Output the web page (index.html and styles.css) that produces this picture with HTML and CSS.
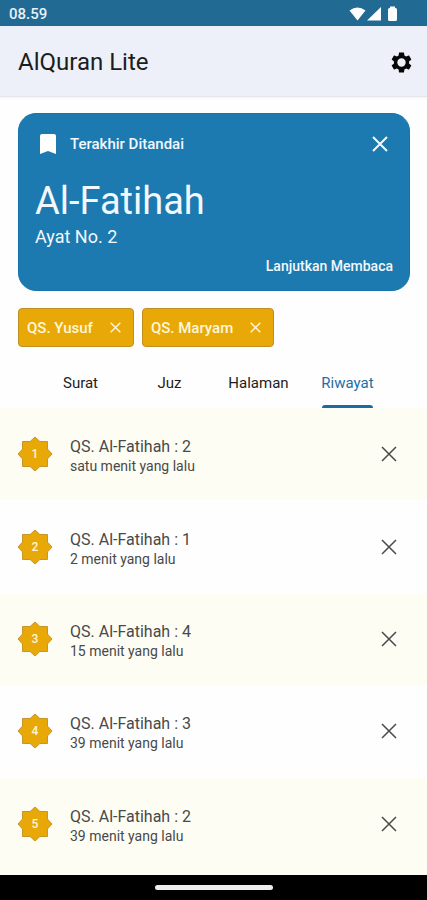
FILE: index.html
```html
<!DOCTYPE html>
<html lang="id">
<head>
<meta charset="utf-8">
<meta name="viewport" content="width=device-width, initial-scale=1">
<title>AlQuran Lite</title>
<link rel="stylesheet" href="styles.css">
</head>
<body>
<svg class="defs" aria-hidden="true">
  <symbol id="close" viewBox="0 0 16 16"><path d="M1 1 15 15M15 1 1 15" fill="none" stroke="currentColor"/></symbol>
  <symbol id="star" viewBox="0 0 36 36"><path d="M18 1 22.9 5.5H30.5V13.1L35 18 30.5 22.9V30.5H22.9L18 35 13.1 30.5H5.500V22.9L1 18 5.500 13.100V5.500H13.100Z" fill="#e8a908" stroke="#c8942c" stroke-width="1"/></symbol>
</svg>
<div class="statusbar">
  <span>08.59</span>
  <svg class="status-icons" viewBox="0 0 50 16" aria-hidden="true">
    <path d="M0.500 4.500Q8.500-1.500 16.500 4.500L8.500 14.500ZM18 14.500 32 1V14.500ZM39 3.500Q39 2 40.500 2H41V.5H46V2H46.500Q48 2 48 3.500V13.500Q48 15 46.500 15H40.500Q39 15 39 13.500Z" fill="#fff"/>
  </svg>
</div>
<header class="appbar">
  <h1>AlQuran Lite</h1>
  <button class="icon-button" aria-label="Pengaturan">
    <svg class="gear" viewBox="2 2 20 20"><path d="M19.140 12.940c.04-.3.060-.61.060-.94 0-.32-.02-.64-.07-.94l2.030-1.580c.18-.14.230-.41.120-.61l-1.920-3.320c-.12-.22-.37-.29-.59-.22l-2.390.96c-.5-.38-1.030-.7-1.620-.94l-.36-2.540c-.04-.24-.24-.41-.48-.41h-3.840c-.24 0-.43.170-.47.410l-.36 2.540c-.59.240-1.130.570-1.620.940l-2.390-.96c-.22-.08-.47 0-.59.220L2.740 8.870c-.12.210-.08.470.12.610l2.030 1.580c-.05.300-.09.630-.09.940s.02.640.07.940l-2.030 1.580c-.18.140-.23.410-.12.610l1.920 3.320c.12.220.37.290.59.220l2.390-.96c.5.380 1.030.7 1.620.940l.36 2.540c.05.240.24.410.48.410h3.840c.24 0 .44-.17.470-.41l.36-2.540c.59-.24 1.130-.56 1.620-.94l2.390.96c.22.080.47 0 .59-.22l1.920-3.320c.12-.22.070-.47-.12-.61l-2.010-1.580zM12 16a4 4 0 1 1 0-8 4 4 0 0 1 0 8z"/></svg>
  </button>
</header>
<main>
  <section class="bookmark">
    <div class="bookmark-top">
      <svg class="flag" viewBox="0 0 16 20" aria-hidden="true"><path d="M0 2Q0 0 2 0H14Q16 0 16 2V20L8 17 0 20Z" fill="#fff"/></svg>
      <span class="bookmark-label">Terakhir Ditandai</span>
      <button class="icon-button" aria-label="Tutup"><svg class="x-card"><use href="#close"/></svg></button>
    </div>
    <h2>Al-Fatihah</h2>
    <p>Ayat No. 2</p>
    <a class="continue" href="#lanjut">Lanjutkan Membaca</a>
  </section>
  <div class="chips">
    <div class="chip">QS. Yusuf<button class="icon-button" aria-label="Hapus QS. Yusuf"><svg class="x-chip"><use href="#close"/></svg></button></div>
    <div class="chip">QS. Maryam<button class="icon-button" aria-label="Hapus QS. Maryam"><svg class="x-chip"><use href="#close"/></svg></button></div>
  </div>
  <nav class="tabs">
    <a href="#surat">Surat</a>
    <a href="#juz">Juz</a>
    <a href="#halaman">Halaman</a>
    <a class="active" href="#riwayat" aria-current="page">Riwayat</a>
  </nav>
  <ol class="history">
    <li><span class="badge"><svg><use href="#star"/></svg><b>1</b></span><div class="entry"><h3>QS. Al-Fatihah : 2</h3><p>satu menit yang lalu</p></div><button class="icon-button" aria-label="Hapus"><svg class="x-row"><use href="#close"/></svg></button></li>
    <li><span class="badge"><svg><use href="#star"/></svg><b>2</b></span><div class="entry"><h3>QS. Al-Fatihah : 1</h3><p>2 menit yang lalu</p></div><button class="icon-button" aria-label="Hapus"><svg class="x-row"><use href="#close"/></svg></button></li>
    <li><span class="badge"><svg><use href="#star"/></svg><b>3</b></span><div class="entry"><h3>QS. Al-Fatihah : 4</h3><p>15 menit yang lalu</p></div><button class="icon-button" aria-label="Hapus"><svg class="x-row"><use href="#close"/></svg></button></li>
    <li><span class="badge"><svg><use href="#star"/></svg><b>4</b></span><div class="entry"><h3>QS. Al-Fatihah : 3</h3><p>39 menit yang lalu</p></div><button class="icon-button" aria-label="Hapus"><svg class="x-row"><use href="#close"/></svg></button></li>
    <li><span class="badge"><svg><use href="#star"/></svg><b>5</b></span><div class="entry"><h3>QS. Al-Fatihah : 2</h3><p>39 menit yang lalu</p></div><button class="icon-button" aria-label="Hapus"><svg class="x-row"><use href="#close"/></svg></button></li>
  </ol>
</main>
<div class="navbar"><span></span></div>
</body>
</html>
```
FILE: styles.css
```css
* {
  box-sizing: border-box;
}

body {
  margin: 0;
  min-height: 100vh;
  display: flex;
  flex-direction: column;
  background: #fefefe;
  color: #1c1d20;
  font-family: Roboto, "Liberation Sans", sans-serif;
}

h1, h2, h3, p, ol {
  margin: 0;
  padding: 0;
  font-weight: 400;
}

a {
  color: inherit;
  text-decoration: none;
}

.defs {
  display: none;
}

.icon-button {
  display: flex;
  padding: 0;
  border: 0;
  background: none;
  color: inherit;
  cursor: pointer;
}

.statusbar {
  display: flex;
  align-items: center;
  justify-content: space-between;
  height: 26px;
  padding: 2px 28px 0 9px;
  background: #216a94;
  color: #e8f1f7;
  font-size: 15px;
  font-weight: 500;
}

.status-icons {
  width: 50px;
  height: 16px;
}

.appbar {
  display: flex;
  align-items: center;
  justify-content: space-between;
  height: 71px;
  padding: 2px 15px 0 18px;
  background: #edf0f9;
  border-bottom: 1px solid #e4e6ec;
  box-shadow: 0 1px 3px #0000000d;
}

h1 {
  font-size: 24px;
}

.gear {
  width: 21px;
  height: 21px;
  fill: #060708;
}

main {
  flex: 1;
  display: flex;
  flex-direction: column;
}

.bookmark {
  display: flex;
  flex-direction: column;
  height: 178px;
  margin: 16px 17px 0 18px;
  padding: 20px 16px 16px;
  border-radius: 18px;
  background: #1c7ab0;
  border: 1px solid #1774ac;
  color: #f2f8fd;
}

.bookmark-top {
  display: flex;
  align-items: center;
  padding: 0 5px;
}

.flag {
  width: 16px;
  height: 20px;
}

.bookmark-label {
  flex: 1;
  margin-left: 14px;
  font-size: 15px;
  font-weight: 500;
}

.x-card {
  width: 16px;
  height: 16px;
  stroke-width: 2px;
}

h2 {
  margin-top: 23px;
  font-size: 38px;
  line-height: 48px;
}

.bookmark p {
  font-size: 18px;
  line-height: 24px;
}

.continue {
  align-self: flex-end;
  margin-top: auto;
  font-size: 14px;
  font-weight: 500;
  line-height: 16px;
}

.chips {
  display: flex;
  gap: 8px;
  margin: 17px 18px 0;
}

.chip {
  display: flex;
  align-items: center;
  gap: 17px;
  height: 39px;
  padding: 0 12px 0 8px;
  border: 1px solid #c18f20;
  border-radius: 4px;
  background: #e8a908;
  color: #fff6dc;
  font-size: 15px;
  font-weight: 500;
}

.x-chip {
  width: 11px;
  height: 11px;
  stroke-width: 2px;
}

.tabs {
  display: grid;
  grid-template-columns: repeat(4, 1fr);
  height: 61px;
  padding: 0 35px 0 36px;
  font-size: 15px;
  text-align: center;
}

.tabs a {
  display: flex;
  flex-direction: column;
  align-items: center;
  padding-top: 27px;
  line-height: 18px;
}

.tabs .active {
  color: #226fa6;
}

.tabs .active::after {
  content: "";
  width: 51px;
  height: 3px;
  margin-top: auto;
  border-radius: 3px 3px 0 0;
  background: #1a6ba3;
}

.history {
  flex: 1;
  display: grid;
  grid-auto-rows: 1fr;
  padding-bottom: 5px;
  list-style: none;
  background: linear-gradient(#fefdf4, #fefdf4) bottom / 100% 5px no-repeat;
}

.history li {
  display: flex;
  align-items: center;
  padding: 0 30px 0 17px;
  color: #48494a;
}

.history li:nth-child(odd) {
  background: #fefdf4;
}

.badge {
  display: grid;
  place-items: center;
  width: 36px;
  height: 36px;
}

.badge > * {
  grid-area: 1 / 1;
}

.badge svg {
  width: 36px;
  height: 36px;
}

.badge b {
  color: #fff6dc;
  font-size: 12px;
  font-weight: 500;
}

.entry {
  flex: 1;
  margin-left: 17px;
  padding-top: 4px;
}

h3 {
  font-size: 16px;
  line-height: 20px;
}

.entry p {
  font-size: 14px;
  line-height: 18px;
}

.x-row {
  width: 16px;
  height: 16px;
  stroke-width: 1.5px;
}

.navbar {
  display: flex;
  align-items: center;
  justify-content: center;
  height: 25px;
  background: #000;
}

.navbar span {
  width: 118px;
  height: 5px;
  border-radius: 3px;
  background: #eee;
}
```
